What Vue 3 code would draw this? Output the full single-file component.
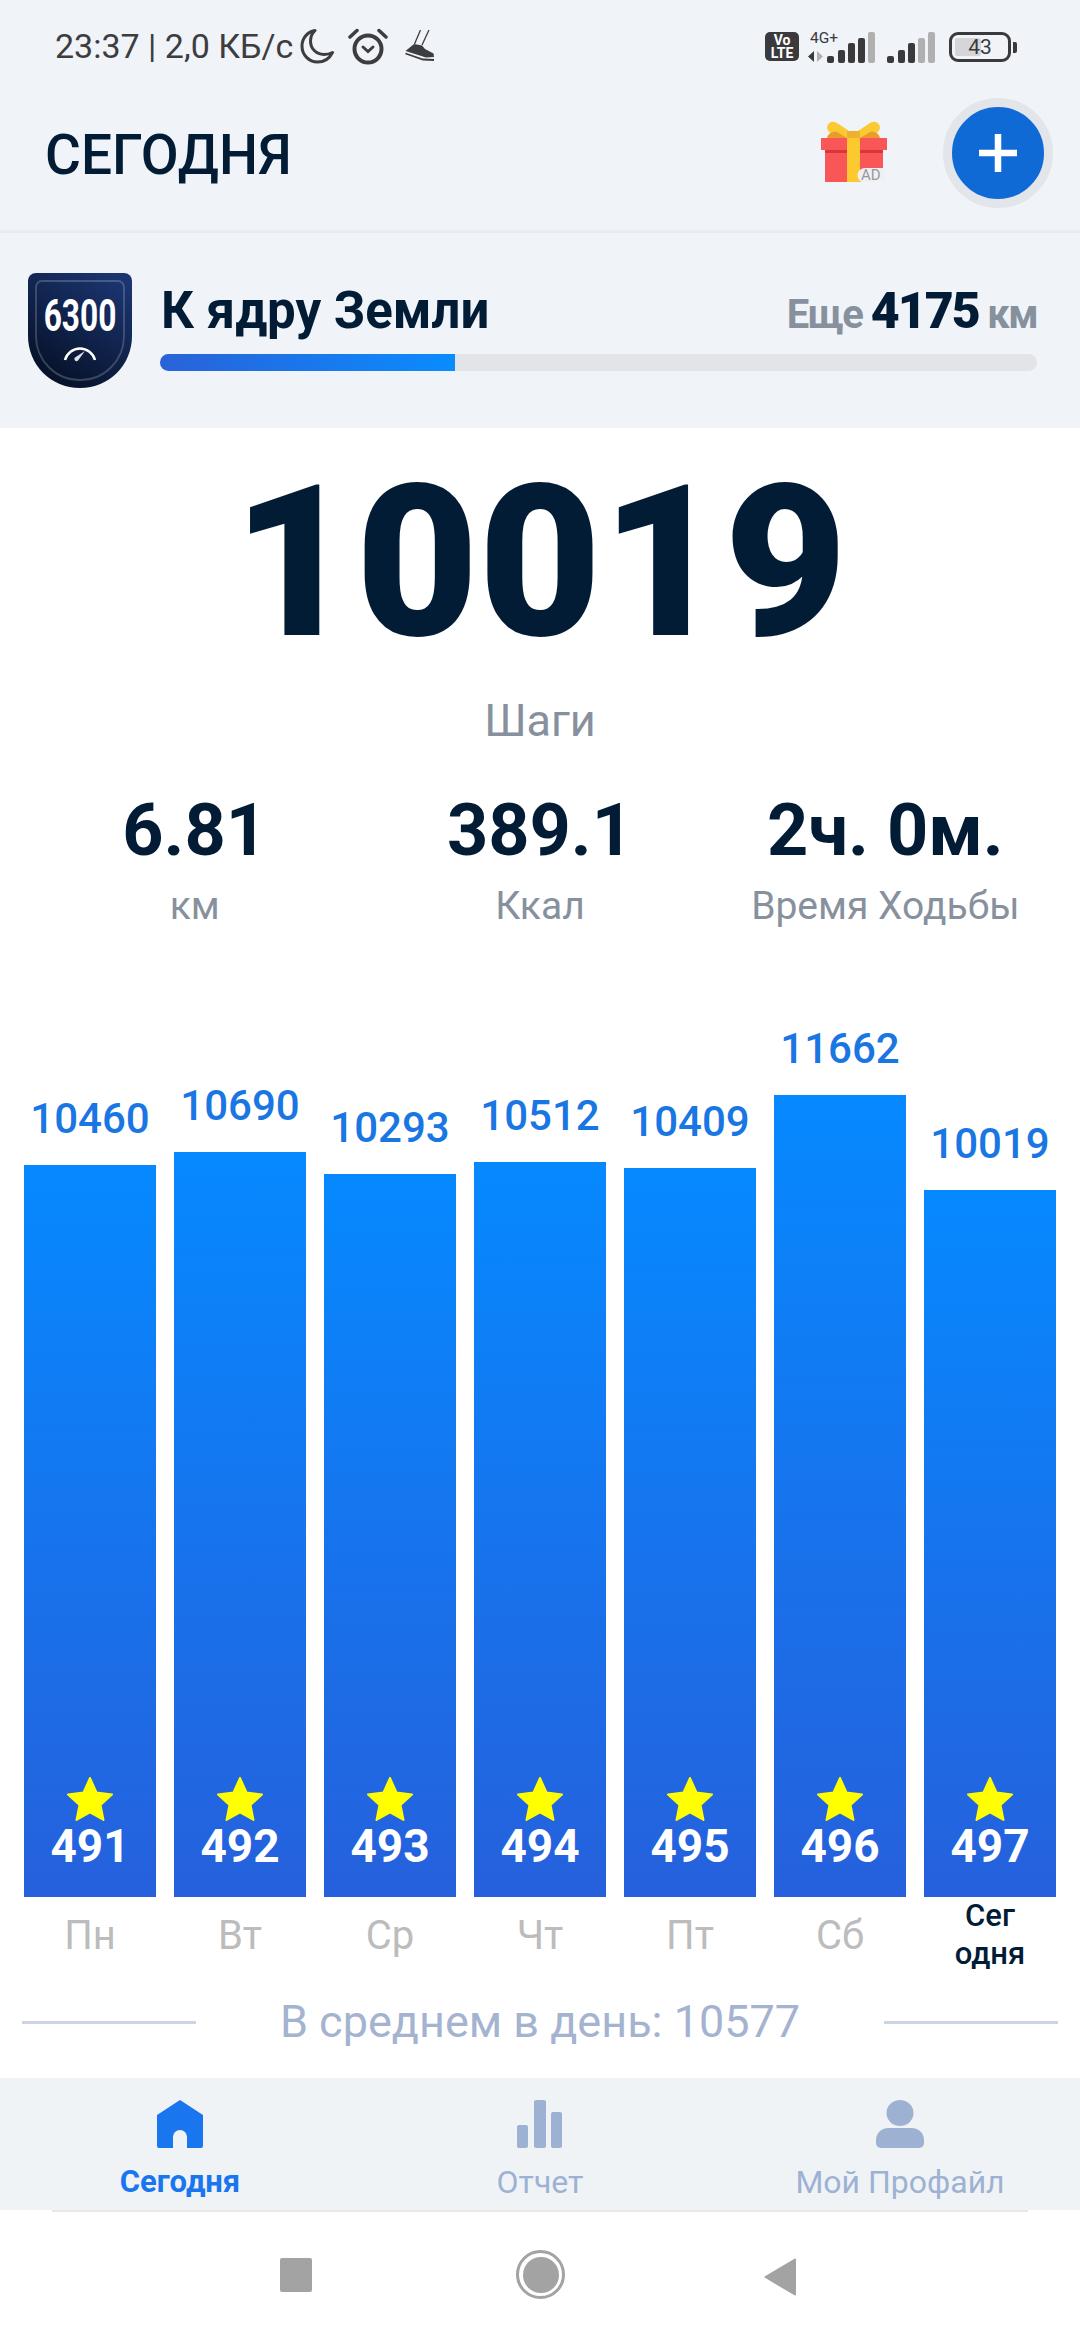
<template>
  <div class="phone">
    <div class="status-bar">
      <div class="status-left">
        <span class="status-text">23:37 | 2,0 КБ/с</span>
        <svg class="ic-moon" viewBox="0 0 34 36" width="34" height="36">
          <path d="M15 2.500C7 4 2 10.500 2 18c0 9 7 16 15.500 16C24 34 29.500 30.500 32.500 24.500 29.500 26 27 26.500 24 26.500 16 26.500 10.500 20.500 10.500 13c0-4 1.500-7.500 4.500-10.500z" fill="none" stroke="#3d3d3f" stroke-width="3" stroke-linejoin="round" />
        </svg>
        <svg class="ic-alarm" viewBox="0 0 40 37" width="40" height="37">
          <g fill="none" stroke="#3d3d3f" stroke-linecap="round">
            <circle cx="20" cy="21" r="13.500" stroke-width="4" />
            <path d="M2 9l7-6.500M38 9l-7-6.500" stroke-width="3.500" />
            <path d="M15 19l5 4.500 5-4.500" stroke-width="3" />
          </g>
        </svg>
        <svg class="ic-shoe" viewBox="0 0 32 32" width="32" height="32">
          <path d="M16.500 0L10.500 14M25 0L18 15" fill="none" stroke="#3d3d3f" stroke-width="1.300" />
          <path d="M10 14l8 1.500 3 3.500 8.500 4.500.5 3.500-8 .5L1.500 21z" fill="#3d3d3f" />
          <path d="M1.500 23.500L19 29.500l11 .5" fill="none" stroke="#3d3d3f" stroke-width="1.800" />
        </svg>
      </div>
      <div class="status-right">
        <div class="volte"><span>Vo</span><span>LTE</span></div>
        <div class="signal-wrap">
          <span class="net-text">4G+</span>
          <svg viewBox="0 0 68 32" width="68" height="32">
            <path d="M6 19v11l-6-5.500z" fill="#3a3a3c" />
            <path d="M9 19l6 5.500L9 30z" fill="#b0b0b0" />
            <rect x="19" y="24" width="7" height="7" rx="2" fill="#3a3a3c" />
            <rect x="30" y="18" width="7" height="13" rx="2" fill="#3a3a3c" />
            <rect x="40" y="11" width="7" height="20" rx="2" fill="#3a3a3c" />
            <rect x="50" y="6" width="7" height="25" rx="2" fill="#3a3a3c" />
            <rect x="60" y="0" width="7" height="31" rx="2" fill="#b0b0b0" />
          </svg>
        </div>
        <svg class="ic-signal2" viewBox="0 0 48 32" width="48" height="32">
          <rect x="0" y="24" width="7" height="7" rx="2" fill="#3a3a3c" />
          <rect x="11" y="18" width="7" height="13" rx="2" fill="#3a3a3c" />
          <rect x="21" y="11" width="7" height="20" rx="2" fill="#3a3a3c" />
          <rect x="31" y="6" width="7" height="25" rx="2" fill="#b0b0b0" />
          <rect x="41" y="0" width="7" height="31" rx="2" fill="#b0b0b0" />
        </svg>
        <div class="battery">
          <div class="battery-box">
            <div class="battery-level"></div>
            <span>43</span>
          </div>
          <div class="battery-tip"></div>
        </div>
      </div>
    </div>

    <header class="header">
      <h1>СЕГОДНЯ</h1>
      <div class="gift">
        <svg viewBox="0 0 66 61" width="66" height="61">
          <path d="M26 17C16 16 6 13 6 6 8 0 12 0 16 2l12 8z" fill="#fbc932" />
          <path d="M39 17c10-1 20-4 20-11-2-6-6-6-10-4L37 10z" fill="#fbc932" />
          <path d="M6 17c1-5 6-7 10-6l10 6zM59 17c-1-5-6-7-10-6l-10 6z" fill="#ec9a2a" />
          <rect x="26" y="10" width="13" height="7" fill="#eeb02f" />
          <rect x="0" y="17" width="66" height="12" fill="#f95658" />
          <rect x="4" y="29" width="58" height="32" fill="#f95658" />
          <rect x="4" y="29" width="58" height="3" fill="#d9363c" />
          <rect x="26" y="17" width="13" height="44" fill="#fcc92f" />
          <circle cx="44" cy="54.500" r="7.500" fill="#eef0f3" />
          <rect x="44" y="47" width="20" height="14" fill="#eef0f3" />
        </svg>
        <span class="ad-text">AD</span>
      </div>
      <button class="add-btn">
        <svg viewBox="0 0 38 38" width="38" height="38">
          <path d="M19 0v38M0 19h38" stroke="#fff" stroke-width="6.500" fill="none" />
        </svg>
      </button>
    </header>

    <section class="goal">
      <div class="shield">
        <svg viewBox="0 0 104 115" width="104" height="115">
          <defs>
            <linearGradient id="shieldFill" x1="0.8" y1="0" x2="0.2" y2="1">
              <stop offset="0" stop-color="#1b3570" />
              <stop offset="1" stop-color="#050f24" />
            </linearGradient>
          </defs>
          <path d="M0 8a8 8 0 0 1 8-8h88a8 8 0 0 1 8 8v55c0 29-23 52-52 52S0 92 0 63z" fill="url(#shieldFill)" />
          <path d="M8 14a6 6 0 0 1 6-6h76a6 6 0 0 1 6 6v49c0 24-19 44-44 44S8 87 8 63z" fill="none" stroke="#fff" stroke-opacity=".2" stroke-width="1.800" />
          <path d="M37 87a15.500 15.500 0 0 1 30 0" fill="none" stroke="#fff" stroke-width="2.500" />
          <path d="M57 78l-10 6.500a2 2 0 0 0 3 3z" fill="#dfe3ea" />
        </svg>
        <span class="shield-text">6300</span>
      </div>
      <div class="goal-body">
        <div class="goal-top">
          <span class="goal-title">К ядру Земли</span>
          <span class="goal-left">Еще <b>4175</b> км</span>
        </div>
        <div class="goal-track">
          <div class="goal-fill"></div>
        </div>
      </div>
    </section>

    <main class="main">
      <div class="steps">10019</div>
      <div class="steps-label">Шаги</div>

      <div class="stats">
        <div v-for="s in stats" :key="s.label" class="stat">
          <div class="stat-value">{{ s.value }}</div>
          <div class="stat-label">{{ s.label }}</div>
        </div>
      </div>

      <div class="chart">
        <div v-for="d in days" :key="d.day" class="col">
          <div class="col-value">{{ d.steps }}</div>
          <div class="bar" :style="{ height: d.height + 'px' }">
            <svg class="star" viewBox="0 0 48 46" width="48" height="46">
              <path d="M24 2l6.500 14.500L46 18.500 34.500 29 37.500 44 24 36.500 10.500 44 13.500 29 2 18.500l15.500-2z" fill="#ffff00" stroke="#ffff00" stroke-width="2" stroke-linejoin="round" />
            </svg>
            <div class="bar-num">{{ d.num }}</div>
          </div>
        </div>
      </div>
      <div class="days">
        <div v-for="d in days" :key="d.day" class="day" :class="{ today: d.today }">{{ d.day }}</div>
      </div>

      <div class="average">
        <span class="avg-line"></span>
        <span class="avg-text">В среднем в день: 10577</span>
        <span class="avg-line"></span>
      </div>
    </main>

    <nav class="tabs">
      <div class="tab active">
        <svg viewBox="0 0 46 48" width="46" height="48">
          <path d="M23 0L46 15v31a2 2 0 0 1-2 2H30V37a7 7 0 0 0-14 0v11H2a2 2 0 0 1-2-2V15z" fill="#1a76ee" />
        </svg>
        <span>Сегодня</span>
      </div>
      <div class="tab">
        <svg viewBox="0 0 46 48" width="46" height="48" fill="#9db2d3">
          <rect x="0" y="25" width="11" height="23" rx="2" />
          <rect x="17" y="0" width="12" height="48" rx="2" />
          <rect x="34" y="12" width="11" height="36" rx="2" />
        </svg>
        <span>Отчет</span>
      </div>
      <div class="tab">
        <svg viewBox="0 0 48 48" width="48" height="48" fill="#9db2d3">
          <ellipse cx="24" cy="13" rx="13.500" ry="13" />
          <path d="M12 28h24a12 12 0 0 1 12 12v3a5 5 0 0 1-5 5H5a5 5 0 0 1-5-5v-3a12 12 0 0 1 12-12z" />
        </svg>
        <span>Мой Профайл</span>
      </div>
    </nav>

    <div class="sys-nav">
      <div class="sys-inner">
        <span class="sys-square"></span>
        <span class="sys-circle"><span></span></span>
        <svg viewBox="0 0 33 38" width="33" height="38">
          <path d="M31 1.500v35L1.500 19z" fill="#a3a3a3" stroke="#a3a3a3" stroke-width="2" stroke-linejoin="round" />
        </svg>
      </div>
    </div>
  </div>
</template>

<script setup>
const stats = [
  { value: '6.81', label: 'км' },
  { value: '389.1', label: 'Ккал' },
  { value: '2ч. 0м.', label: 'Время Ходьбы' },
]

const days = [
  { day: 'Пн', steps: 10460, num: 491, height: 732 },
  { day: 'Вт', steps: 10690, num: 492, height: 745 },
  { day: 'Ср', steps: 10293, num: 493, height: 723 },
  { day: 'Чт', steps: 10512, num: 494, height: 735 },
  { day: 'Пт', steps: 10409, num: 495, height: 729 },
  { day: 'Сб', steps: 11662, num: 496, height: 802 },
  { day: 'Сег одня', steps: 10019, num: 497, height: 707, today: true },
]
</script>

<style>
html, body {
  margin: 0;
  background: #fff;
}
</style>

<style scoped>
.phone {
  width: 1080px;
  height: 2340px;
  display: flex;
  flex-direction: column;
  overflow: hidden;
  font-family: Roboto, "Noto Sans", sans-serif;
  color: #031c36;
  background: #fff;
}

.status-bar {
  height: 90px;
  box-sizing: border-box;
  padding: 26px 63px 0 55px;
  display: flex;
  justify-content: space-between;
  align-items: flex-start;
  background: #f0f3f8;
}
.status-left {
  display: flex;
  align-items: center;
  height: 40px;
}
.status-text {
  font-size: 34px;
  color: #3d3d3f;
  white-space: nowrap;
}
.ic-moon { margin-left: 7px; }
.ic-alarm { margin-left: 14px; }
.ic-shoe { margin-left: 16px; }

.status-right {
  display: flex;
  align-items: flex-start;
  padding-top: 6px;
}
.volte {
  width: 34px;
  height: 29px;
  border-radius: 5px;
  background: #3a3a3c;
  color: #fff;
  font-size: 14px;
  line-height: 13px;
  font-weight: 700;
  display: flex;
  flex-direction: column;
  align-items: center;
  justify-content: center;
}
.signal-wrap {
  position: relative;
  height: 32px;
  margin-left: 9px;
}
.net-text {
  position: absolute;
  left: 2px;
  top: -1px;
  font-size: 15.500px;
  line-height: 15px;
  color: #3a3a3c;
}
.ic-signal2 { margin-left: 11px; }
.battery {
  margin-left: 14px;
  display: flex;
  align-items: center;
}
.battery-box {
  position: relative;
  width: 62px;
  height: 30px;
  box-sizing: border-box;
  border: 3.500px solid #3a3a3c;
  border-radius: 9px;
  display: flex;
  align-items: center;
  justify-content: center;
  font-size: 21px;
  color: #3a3a3c;
}
.battery-box span { position: relative; }
.battery-level {
  position: absolute;
  left: 3px;
  top: 3px;
  bottom: 3px;
  width: 26px;
  border-radius: 2px;
  background: #d6d6d8;
}
.battery-tip {
  width: 4px;
  height: 11px;
  margin-left: 2px;
  border-radius: 0 2px 2px 0;
  background: #3a3a3c;
}

.header {
  height: 143px;
  box-sizing: border-box;
  padding: 0 27px 17px 45px;
  display: flex;
  align-items: center;
  background: #f0f3f8;
  border-bottom: 3px solid #e8ebf0;
}
.header h1 {
  margin: 6px auto 0 0;
  font-size: 55px;
  font-weight: 500;
  color: #031c36;
}
.gift {
  position: relative;
  height: 61px;
  margin-right: 56px;
}
.ad-text {
  position: absolute;
  left: 40px;
  top: 47px;
  font-size: 15px;
  line-height: 15px;
  color: #999;
}
.add-btn {
  width: 92px;
  height: 92px;
  box-sizing: content-box;
  flex: none;
  padding: 0;
  margin-top: 2px;
  border: 9px solid #e2e5ea;
  border-radius: 50%;
  background: #0f6ad6;
  display: flex;
  align-items: center;
  justify-content: center;
}

.goal {
  height: 195px;
  box-sizing: border-box;
  padding: 40px 43px 0 28px;
  display: flex;
  align-items: flex-start;
  background: #f0f3f8;
}
.shield {
  position: relative;
  height: 115px;
}
.shield-text {
  position: absolute;
  left: 0;
  right: 0;
  top: 21px;
  text-align: center;
  font-size: 44px;
  line-height: 44px;
  font-weight: 700;
  color: #fff;
  transform: scaleX(.72);
}
.goal-body {
  flex: 1;
  margin-left: 28px;
}
.goal-top {
  height: 81px;
  box-sizing: border-box;
  padding-top: 3px;
  display: flex;
  justify-content: space-between;
  align-items: baseline;
}
.goal-title {
  margin-left: 1px;
  font-size: 51px;
  font-weight: 700;
  line-height: 70px;
}
.goal-left {
  font-size: 40px;
  font-weight: 700;
  letter-spacing: -1.500px;
  color: #87919e;
}
.goal-left b {
  font-size: 50px;
  letter-spacing: -2px;
  color: #031c36;
}
.goal-track {
  height: 17px;
  border-radius: 9px;
  background: #e2e4e7;
  overflow: hidden;
}
.goal-fill {
  width: 295px;
  height: 100%;
  background: linear-gradient(90deg, #2a62d8, #0a8cff);
}

.main {
  flex: 1;
  display: flex;
  flex-direction: column;
  align-items: center;
  padding-top: 30px;
}
.steps {
  font-size: 212px;
  line-height: 210px;
  font-weight: 900;
  color: #031c36;
}
.steps-label {
  margin-top: 28px;
  font-size: 45px;
  line-height: 50px;
  color: #87919e;
}
.stats {
  width: 100%;
  box-sizing: border-box;
  margin-top: 43px;
  display: grid;
  grid-template-columns: repeat(3, 1fr);
  padding: 0 22px;
}
.stat {
  text-align: center;
}
.stat-value {
  font-size: 72px;
  line-height: 84px;
  font-weight: 700;
  color: #031c36;
}
.stat-label {
  font-size: 39px;
  line-height: 44px;
  margin-top: 11px;
  color: #87919e;
  white-space: nowrap;
}

.chart {
  width: 100%;
  height: 969px;
  box-sizing: border-box;
  padding: 0 24px;
  flex: none;
  display: flex;
  align-items: flex-end;
  gap: 18px;
}
.col {
  width: 132px;
  text-align: center;
}
.col-value {
  font-size: 42px;
  line-height: 50px;
  margin-bottom: 21px;
  font-weight: 500;
  color: #1a76e2;
}
.bar {
  box-sizing: border-box;
  display: flex;
  flex-direction: column;
  align-items: center;
  justify-content: flex-end;
  padding-bottom: 26px;
  background: linear-gradient(180deg, #0689ff 0%, #2660dc 100%);
}
.star { display: block; }
.bar-num {
  font-size: 46px;
  line-height: 50px;
  font-weight: 700;
  color: #fff;
  margin-top: -1px;
}

.days {
  width: 100%;
  box-sizing: border-box;
  height: 76px;
  padding: 0 24px;
  flex: none;
  display: flex;
  gap: 18px;
}
.day {
  width: 132px;
  padding-top: 15px;
  text-align: center;
  font-size: 40px;
  line-height: 48px;
  color: #bcbcbc;
}
.day.today {
  padding: 0 30px;
  box-sizing: border-box;
  font-size: 31px;
  line-height: 38px;
  font-weight: 500;
  color: #031c36;
}

.average {
  width: 100%;
  box-sizing: border-box;
  margin-top: 23px;
  padding: 0 22px;
  display: flex;
  align-items: center;
  justify-content: space-between;
}
.avg-line {
  width: 174px;
  height: 3px;
  background: #cbd5e5;
}
.avg-text {
  font-size: 45px;
  line-height: 52px;
  color: #a4b3d0;
}

.tabs {
  height: 132px;
  flex: none;
  display: grid;
  grid-template-columns: repeat(3, 1fr);
  background: #f0f3f6;
}
.tab {
  display: flex;
  flex-direction: column;
  align-items: center;
  padding-top: 22px;
  font-size: 32px;
  line-height: 36px;
  color: #9db2d3;
}
.tab span {
  margin-top: 16px;
}
.tab.active {
  color: #1a76ee;
  font-size: 31px;
  font-weight: 700;
}

.sys-nav {
  height: 130px;
  flex: none;
  box-sizing: border-box;
  padding: 0 52px;
}
.sys-inner {
  height: 100%;
  box-sizing: border-box;
  border-top: 2px solid #e6e8ea;
  padding: 38px 0 0 228px;
  display: flex;
  align-items: flex-start;
}
.sys-inner svg { margin: 8px 0 0 199px; }
.sys-square {
  width: 32px;
  height: 34px;
  margin-top: 8px;
  border-radius: 2px;
  background: #a3a3a3;
}
.sys-circle {
  width: 49px;
  height: 49px;
  margin-left: 204px;
  box-sizing: border-box;
  border: 3.500px solid #a3a3a3;
  border-radius: 50%;
  padding: 3.500px;
}
.sys-circle span {
  display: block;
  width: 100%;
  height: 100%;
  border-radius: 50%;
  background: #a3a3a3;
}
</style>
